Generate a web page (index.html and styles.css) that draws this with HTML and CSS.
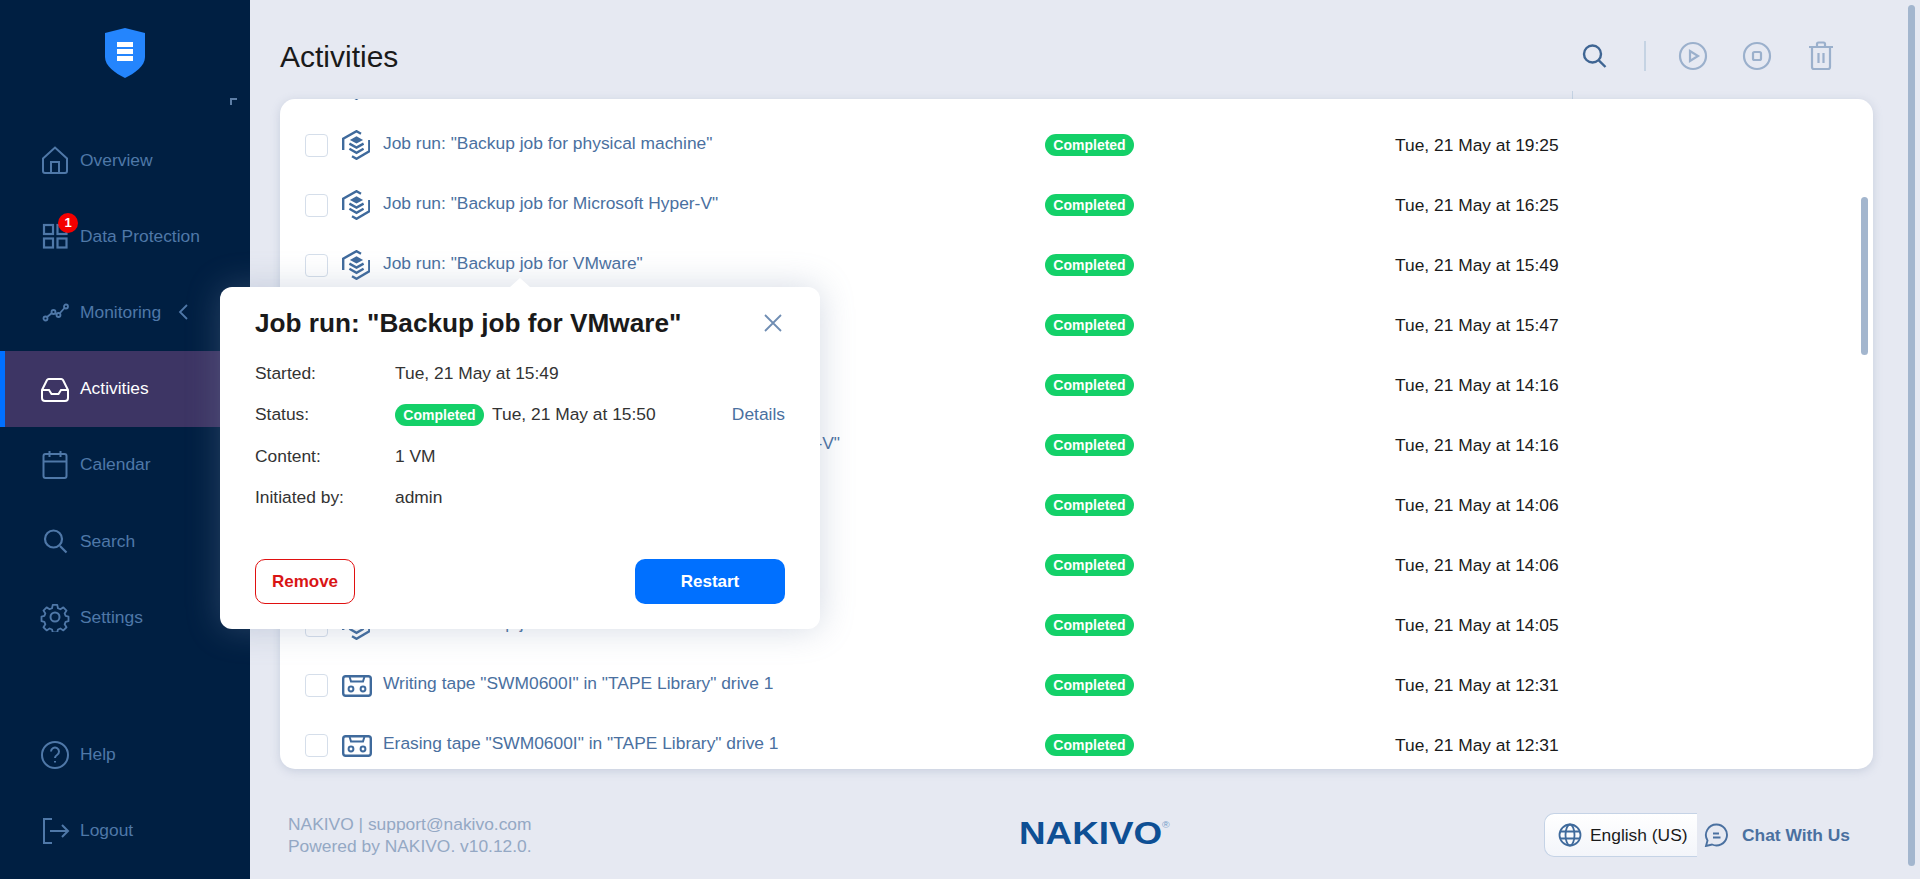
FILE: index.html
```html
<!DOCTYPE html>
<html lang="en">

<head>
    <meta charset="UTF-8">
    <title>Activities - NAKIVO</title>
    <link rel="stylesheet" href="styles.css">
</head>

<body>
    <svg class="sprites" width="0" height="0">
        <symbol id="job" viewBox="0 0 28 30">
            <path d="M1.2 20V8.600L14.500 1.200 19 3.700M27.300 10v11.200L14.500 28.800 10 26.300" fill="none" stroke="currentColor" stroke-width="2.400"/>
            <path d="M14.500 6.200l6.600 3.700-6.600 3.700-6.600-3.700z" fill="currentColor"/>
            <path d="M7.400 13.600l7.100 4 7.100-4M7.400 18.800l7.100 4 7.100-4" fill="none" stroke="currentColor" stroke-width="2.400"/>
        </symbol>
        <symbol id="tape" viewBox="0 0 30 22">
            <rect x="1.200" y="1.200" width="27.600" height="19.600" rx="2.500" fill="none" stroke="currentColor" stroke-width="2.400"/>
            <path d="M7.500 1.500l1.500 5h12l1.500-5" fill="none" stroke="currentColor" stroke-width="2"/>
            <circle cx="9" cy="14" r="2.400" fill="none" stroke="currentColor" stroke-width="2"/>
            <circle cx="21" cy="14" r="2.400" fill="none" stroke="currentColor" stroke-width="2"/>
        </symbol>
    </svg>

    <aside class="sidebar">
        <div class="brand">
            <svg width="40" height="50" viewBox="0 0 40 50">
                <path d="M20 0l20 5v24c0 9-10 16-20 21C10 45 0 38 0 29V5z" fill="#2485fd"/>
                <path d="M12 14h16v5H12zM12 21h16v5H12zM12 28h16v5H12z" fill="#fff"/>
            </svg>
            <span class="collapse"></span>
        </div>
        <nav class="nav">
            <a class="nav-item">
                <svg width="30" height="30" viewBox="0 0 30 30" fill="none" stroke="currentColor" stroke-width="2"><path d="M3 13.500L15 2.500l12 11V26a2 2 0 0 1-2 2H5a2 2 0 0 1-2-2z"/><path d="M11 28V17h8v11"/></svg>
                <span>Overview</span>
            </a>
            <a class="nav-item">
                <svg width="30" height="30" viewBox="0 0 30 30" fill="none" stroke="currentColor" stroke-width="2.200"><rect x="4" y="4" width="9" height="9"/><rect x="17.500" y="4" width="9" height="9"/><rect x="4" y="17.500" width="9" height="9"/><rect x="17.500" y="17.500" width="9" height="9"/></svg>
                <span>Data Protection</span>
                <b class="nav-badge">1</b>
            </a>
            <a class="nav-item">
                <svg width="30" height="30" viewBox="0 0 30 30" fill="none" stroke="currentColor" stroke-width="1.800"><path d="M7 20l5-4M15 16l2 1.500M20 16l4.500-5"/><circle cx="5.500" cy="21.500" r="2"/><circle cx="13.500" cy="15" r="2"/><circle cx="18.500" cy="18" r="2"/><circle cx="26" cy="9.500" r="2"/></svg>
                <span>Monitoring</span>
                <svg class="chevron" width="10" height="16" viewBox="0 0 10 16" fill="none" stroke="currentColor" stroke-width="1.800"><path d="M9 1L2 8l7 7"/></svg>
            </a>
            <a class="nav-item active">
                <svg width="30" height="30" viewBox="0 0 30 30" fill="none" stroke="currentColor" stroke-width="2"><path d="M2 16l5-10a2 2 0 0 1 2-1h12a2 2 0 0 1 2 1l5 10v8a3 3 0 0 1-3 3H5a3 3 0 0 1-3-3z"/><path d="M2 16h7l2.500 4h7l2.500-4h7"/></svg>
                <span>Activities</span>
            </a>
            <a class="nav-item">
                <svg width="30" height="30" viewBox="0 0 30 30" fill="none" stroke="currentColor" stroke-width="2"><rect x="3.500" y="4" width="23" height="24" rx="2"/><path d="M3.500 11.500h23M9.500 1v6M20.500 1v6"/></svg>
                <span>Calendar</span>
            </a>
            <a class="nav-item">
                <svg width="30" height="30" viewBox="0 0 30 30" fill="none" stroke="currentColor" stroke-width="2.200"><circle cx="13.500" cy="13" r="8.500"/><path d="M20 20l6.500 6.500"/></svg>
                <span>Search</span>
            </a>
            <a class="nav-item">
                <svg width="30" height="30" viewBox="0 0 30 30" fill="none" stroke="currentColor" stroke-width="2"><circle cx="15" cy="15" r="4.500"/><path d="M12.500 1.500h5l.8 3.800 2.700 1.100 3.300-2.100 3.500 3.500-2.100 3.300 1.100 2.700 3.200.8v5l-3.200.8-1.100 2.700 2.100 3.300-3.500 3.500-3.300-2.100-2.700 1.100-.8 3.200h-5l-.8-3.200-2.700-1.100-3.300 2.100-3.500-3.500 2.100-3.300-1.100-2.700-3.200-.8v-5l3.200-.8 1.100-2.700-2.100-3.300 3.500-3.500 3.300 2.100 2.700-1.100z" stroke-linejoin="round" transform="translate(1.500 1.500) scale(.9)"/></svg>
                <span>Settings</span>
            </a>
        </nav>
        <nav class="nav nav-bottom">
            <a class="nav-item">
                <svg width="30" height="30" viewBox="0 0 30 30" fill="none" stroke="currentColor" stroke-width="2"><circle cx="15" cy="15" r="13"/><path d="M11 11.500a4 4 0 1 1 6 3.500c-1.300.8-2 1.500-2 3"/><path d="M15 21v1.500"/></svg>
                <span>Help</span>
            </a>
            <a class="nav-item">
                <svg width="30" height="30" viewBox="0 0 30 30" fill="none" stroke="currentColor" stroke-width="2"><path d="M12 3H4v24h8"/><path d="M10 15h18M22 9l6 6-6 6"/></svg>
                <span>Logout</span>
            </a>
        </nav>
    </aside>

    <main class="main">
        <header class="topbar">
            <h1>Activities</h1>
            <div class="tools">
                <svg class="tool tool-on" width="28" height="28" viewBox="0 0 28 28" fill="none" stroke="currentColor" stroke-width="2.400"><circle cx="10.500" cy="12" r="8.500"/><path d="M16.800 18.300l6.700 6.700"/></svg>
                <span class="tools-sep"></span>
                <svg class="tool" width="30" height="30" viewBox="0 0 30 30" fill="none" stroke="currentColor" stroke-width="2.200"><circle cx="15" cy="15" r="13"/><path d="M12 10v10l8-5z"/></svg>
                <svg class="tool" width="30" height="30" viewBox="0 0 30 30" fill="none" stroke="currentColor" stroke-width="2.200"><circle cx="15" cy="15" r="13"/><rect x="11" y="11" width="8" height="8" rx="1.500"/></svg>
                <svg class="tool" width="30" height="30" viewBox="0 0 30 30" fill="none" stroke="currentColor" stroke-width="2.200"><path d="M3 6h24M11 6V3a1.500 1.500 0 0 1 1.500-1.500h5A1.500 1.500 0 0 1 19 3v3M6 6v20a2 2 0 0 0 2 2h14a2 2 0 0 0 2-2V6M12.500 12v10M17.500 12v10"/></svg>
            </div>
            <span class="col-tick"></span>
        </header>

        <section class="card">
            <div class="rows">
                <div class="row">
                    <span class="check"></span><svg class="ico-job"><use href="#job"/></svg>
                    <a class="name">Job run: "Backup job for Nutanix AHV"</a>
                    <span class="badge">Completed</span><span class="when">Tue, 21 May at 19:47</span>
                </div>
                <div class="row">
                    <span class="check"></span><svg class="ico-job"><use href="#job"/></svg>
                    <a class="name">Job run: "Backup job for physical machine"</a>
                    <span class="badge">Completed</span><span class="when">Tue, 21 May at 19:25</span>
                </div>
                <div class="row">
                    <span class="check"></span><svg class="ico-job"><use href="#job"/></svg>
                    <a class="name">Job run: "Backup job for Microsoft Hyper-V"</a>
                    <span class="badge">Completed</span><span class="when">Tue, 21 May at 16:25</span>
                </div>
                <div class="row">
                    <span class="check"></span><svg class="ico-job"><use href="#job"/></svg>
                    <a class="name">Job run: "Backup job for VMware"</a>
                    <span class="badge">Completed</span><span class="when">Tue, 21 May at 15:49</span>
                </div>
                <div class="row">
                    <span class="check"></span><svg class="ico-job"><use href="#job"/></svg>
                    <a class="name">Job run: "Backup job"</a>
                    <span class="badge">Completed</span><span class="when">Tue, 21 May at 15:47</span>
                </div>
                <div class="row">
                    <span class="check"></span><svg class="ico-job"><use href="#job"/></svg>
                    <a class="name">Job run: "Backup job"</a>
                    <span class="badge">Completed</span><span class="when">Tue, 21 May at 14:16</span>
                </div>
                <div class="row">
                    <span class="check"></span><svg class="ico-job"><use href="#job"/></svg>
                    <a class="name">Job run: "Realtime full replication job for Microsoft Hyper-V"</a>
                    <span class="badge">Completed</span><span class="when">Tue, 21 May at 14:16</span>
                </div>
                <div class="row">
                    <span class="check"></span><svg class="ico-job"><use href="#job"/></svg>
                    <a class="name">Job run: "Backup job"</a>
                    <span class="badge">Completed</span><span class="when">Tue, 21 May at 14:06</span>
                </div>
                <div class="row">
                    <span class="check"></span><svg class="ico-job"><use href="#job"/></svg>
                    <a class="name">Job run: "Backup job"</a>
                    <span class="badge">Completed</span><span class="when">Tue, 21 May at 14:06</span>
                </div>
                <div class="row">
                    <span class="check"></span><svg class="ico-job"><use href="#job"/></svg>
                    <a class="name">Job run: "Backup job for VMware"</a>
                    <span class="badge">Completed</span><span class="when">Tue, 21 May at 14:05</span>
                </div>
                <div class="row">
                    <span class="check"></span><svg class="ico-tape"><use href="#tape"/></svg>
                    <a class="name">Writing tape "SWM0600I" in "TAPE Library" drive 1</a>
                    <span class="badge">Completed</span><span class="when">Tue, 21 May at 12:31</span>
                </div>
                <div class="row">
                    <span class="check"></span><svg class="ico-tape"><use href="#tape"/></svg>
                    <a class="name">Erasing tape "SWM0600I" in "TAPE Library" drive 1</a>
                    <span class="badge">Completed</span><span class="when">Tue, 21 May at 12:31</span>
                </div>
            </div>
            <span class="thumb"></span>
        </section>

        <footer class="footer">
            <div class="foot-info">NAKIVO | support@nakivo.com<br>Powered by NAKIVO. v10.12.0.</div>
            <div class="logo">NAKIVO<sup>®</sup></div>
            <div class="foot-right">
                <div class="lang">
                    <svg width="24" height="24" viewBox="0 0 24 24" fill="none" stroke="currentColor" stroke-width="1.800"><circle cx="12" cy="12" r="10.500"/><ellipse cx="12" cy="12" rx="4.500" ry="10.500"/><path d="M2 8.500h20M2 15.500h20"/></svg>
                    <span>English (US)</span>
                </div>
                <div class="chat">
                    <svg width="24" height="24" viewBox="0 0 24 24" fill="none" stroke="currentColor" stroke-width="1.900"><path d="M12.500 1.500a10.500 10.500 0 1 1-4.500 20l-6 1.500 1.500-5.500a10.500 10.500 0 0 1 9-16z"/><path d="M9 10.500h6M9 14.500h7.500"/></svg>
                    <span>Chat With Us</span>
                </div>
            </div>
        </footer>
    </main>

    <div class="popup">
        <div class="popup-head">
            <h2>Job run: "Backup job for VMware"</h2>
            <svg width="18" height="18" viewBox="0 0 18 18" fill="none" stroke="#6f8db3" stroke-width="1.800"><path d="M1 1l16 16M17 1L1 17"/></svg>
        </div>
        <dl class="facts">
            <div class="fact"><dt>Started:</dt><dd>Tue, 21 May at 15:49</dd></div>
            <div class="fact"><dt>Status:</dt><dd><span class="badge">Completed</span><span class="status-time">Tue, 21 May at 15:50</span><a class="details">Details</a></dd></div>
            <div class="fact"><dt>Content:</dt><dd>1 VM</dd></div>
            <div class="fact"><dt>Initiated by:</dt><dd>admin</dd></div>
        </dl>
        <div class="popup-actions">
            <button class="btn btn-remove" type="button">Remove</button>
            <button class="btn btn-restart" type="button">Restart</button>
        </div>
    </div>

    <span class="page-thumb"></span>
</body>

</html>
```

FILE: styles.css
```css
body {
    margin: 0;
    height: 879px;
    overflow: hidden;
    display: flex;
    background-color: #e6e9f2;
    font-family: "Liberation Sans", sans-serif;
    font-size: 17.4px;
    color: #1a1a1a;
}

.sprites {
    position: absolute;
}

.sidebar {
    width: 250px;
    flex-shrink: 0;
    display: flex;
    flex-direction: column;
    background-color: #001f42;
    color: #4f78a8;
}

.brand {
    height: 122px;
    box-sizing: border-box;
    padding-top: 28px;
    display: flex;
    justify-content: center;
    position: relative;
}

.collapse {
    position: absolute;
    top: 98px;
    left: 230px;
    width: 5px;
    height: 5px;
    border-top: 2px solid #5d7ea6;
    border-left: 2px solid #5d7ea6;
}

.nav-item {
    height: 76.2px;
    box-sizing: border-box;
    padding-left: 40px;
    display: flex;
    align-items: center;
    gap: 10px;
    position: relative;
}

.nav-item.active {
    color: #fff;
    background-color: #3d3564;
    border-left: 5px solid #0070ff;
    padding-left: 35px;
}

.nav-badge {
    position: absolute;
    left: 58px;
    top: 15px;
    width: 20px;
    height: 20px;
    border-radius: 50%;
    background-color: #f40000;
    color: #fff;
    font-size: 13px;
    line-height: 20px;
    text-align: center;
}

.chevron {
    margin-left: 7px;
}

.nav-bottom {
    margin-top: auto;
    margin-bottom: 10px;
}

.main {
    flex: 1;
    min-width: 0;
    display: flex;
    flex-direction: column;
    padding: 0 47px 0 30px;
}

.topbar {
    height: 99px;
    flex-shrink: 0;
    display: flex;
    justify-content: space-between;
    align-items: flex-start;
    position: relative;
}

h1 {
    margin: 39px 0 0;
    font-size: 30px;
    line-height: 36px;
    font-weight: 400;
}

.tools {
    margin: 41px 37px 0 0;
    height: 30px;
    display: flex;
    align-items: center;
    gap: 34px;
    color: #9bb0cc;
}

.tool-on {
    color: #3f6593;
}

.tools-sep {
    width: 2px;
    height: 30px;
    margin-right: -2px;
    background-color: #c5d3e3;
}

.col-tick {
    position: absolute;
    left: 1292px;
    top: 91px;
    width: 1px;
    height: 8px;
    background-color: #c5d3e3;
}

.card {
    height: 670px;
    flex-shrink: 0;
    overflow: hidden;
    position: relative;
    background-color: #fff;
    border-radius: 15px;
    box-shadow: 0 2px 10px rgba(130, 145, 175, 0.3);
}

.rows {
    margin-top: -44px;
}

.row {
    height: 60px;
    padding-left: 25px;
    display: grid;
    grid-template-columns: 37px 41px 662px 350px 1fr;
    align-items: center;
}

.check {
    width: 21px;
    height: 21px;
    border: 1px solid #d5deea;
    border-radius: 4px;
}

.ico-job {
    width: 28px;
    height: 30px;
    color: #3f6a9c;
}

.ico-tape {
    width: 30px;
    height: 22px;
    margin-top: 1px;
    color: #3f6a9c;
}

.name {
    color: #4a70a0;
    white-space: nowrap;
    margin-bottom: 4px;
}

.badge {
    width: 89px;
    height: 22px;
    border-radius: 11px;
    background-color: #14d068;
    color: #fff;
    font-size: 14px;
    font-weight: 700;
    line-height: 22px;
    text-align: center;
    flex-shrink: 0;
}

.thumb {
    position: absolute;
    right: 5px;
    top: 98px;
    width: 7px;
    height: 158px;
    border-radius: 4px;
    background-color: #a3b6ce;
}

.page-thumb {
    position: absolute;
    left: 1908px;
    top: 5px;
    width: 7px;
    height: 861px;
    border-radius: 4px;
    background-color: #a3b6ce;
}

.footer {
    flex: 1;
    display: flex;
    align-items: flex-start;
    padding: 44px 0 0 8px;
    margin-right: -47px;
}

.foot-info {
    width: 731px;
    flex-shrink: 0;
    line-height: 22px;
    color: #94a8c4;
}

.logo {
    margin-top: 4px;
    font-size: 32px;
    line-height: 32px;
    font-weight: 700;
    color: #0e4f94;
    transform: scaleX(1.15);
    transform-origin: left;
}

.logo sup {
    font-size: 9px;
    font-weight: 400;
    line-height: 0;
    vertical-align: 16px;
    color: #6f9bc8;
}

.foot-right {
    margin: 0 70px 0 auto;
    display: flex;
    align-items: center;
    gap: 7px;
    color: #3f6a9c;
}

.lang {
    width: 153px;
    height: 44px;
    box-sizing: border-box;
    padding-left: 13px;
    display: flex;
    align-items: center;
    gap: 8px;
    border: 1px solid #c5d3e6;
    border-right: 0;
    border-radius: 10px 0 0 10px;
    background: linear-gradient(to bottom, #fff, #f3f5fa);
}

.lang span {
    color: #1a1a1a;
    white-space: nowrap;
}

.chat {
    display: flex;
    align-items: center;
    gap: 14px;
    font-weight: 700;
    color: #4a70a0;
    white-space: nowrap;
}

.popup {
    position: absolute;
    left: 220px;
    top: 287px;
    width: 600px;
    height: 342px;
    box-sizing: border-box;
    padding: 0 35px;
    display: flex;
    flex-direction: column;
    background-color: #fff;
    border-radius: 12px;
    box-shadow: 0 0 34px rgba(120, 140, 170, 0.32);
}

.popup::before {
    content: "";
    position: absolute;
    left: 290px;
    top: -9px;
    border-left: 10px solid transparent;
    border-right: 10px solid transparent;
    border-bottom: 9px solid #fff;
}

.popup-head {
    height: 65.5px;
    box-sizing: border-box;
    padding: 20px 3px 0 0;
    display: flex;
    justify-content: space-between;
    align-items: flex-start;
}

.popup-head svg {
    margin-top: 7px;
}

h2 {
    margin: 0;
    font-size: 26.2px;
    line-height: 32px;
    font-weight: 700;
}

.facts {
    margin: 0;
    color: #333;
}

.fact {
    height: 41.5px;
    display: flex;
    align-items: center;
}

.fact dt {
    width: 140px;
}

.fact dd {
    margin: 0;
    flex: 1;
    display: flex;
    align-items: center;
}

.status-time {
    margin-left: 8px;
}

.details {
    margin-left: auto;
    color: #4a70a0;
}

.popup-actions {
    margin-top: auto;
    margin-bottom: 25px;
    display: flex;
    justify-content: space-between;
}

.btn {
    height: 45px;
    border-radius: 10px;
    font-family: inherit;
    font-size: 17px;
    font-weight: 700;
}

.btn-remove {
    width: 100px;
    border: 1px solid #e01010;
    background-color: #fff;
    color: #d91515;
}

.btn-restart {
    width: 150px;
    border: 0;
    background-color: #0070ff;
    color: #fff;
}
```
